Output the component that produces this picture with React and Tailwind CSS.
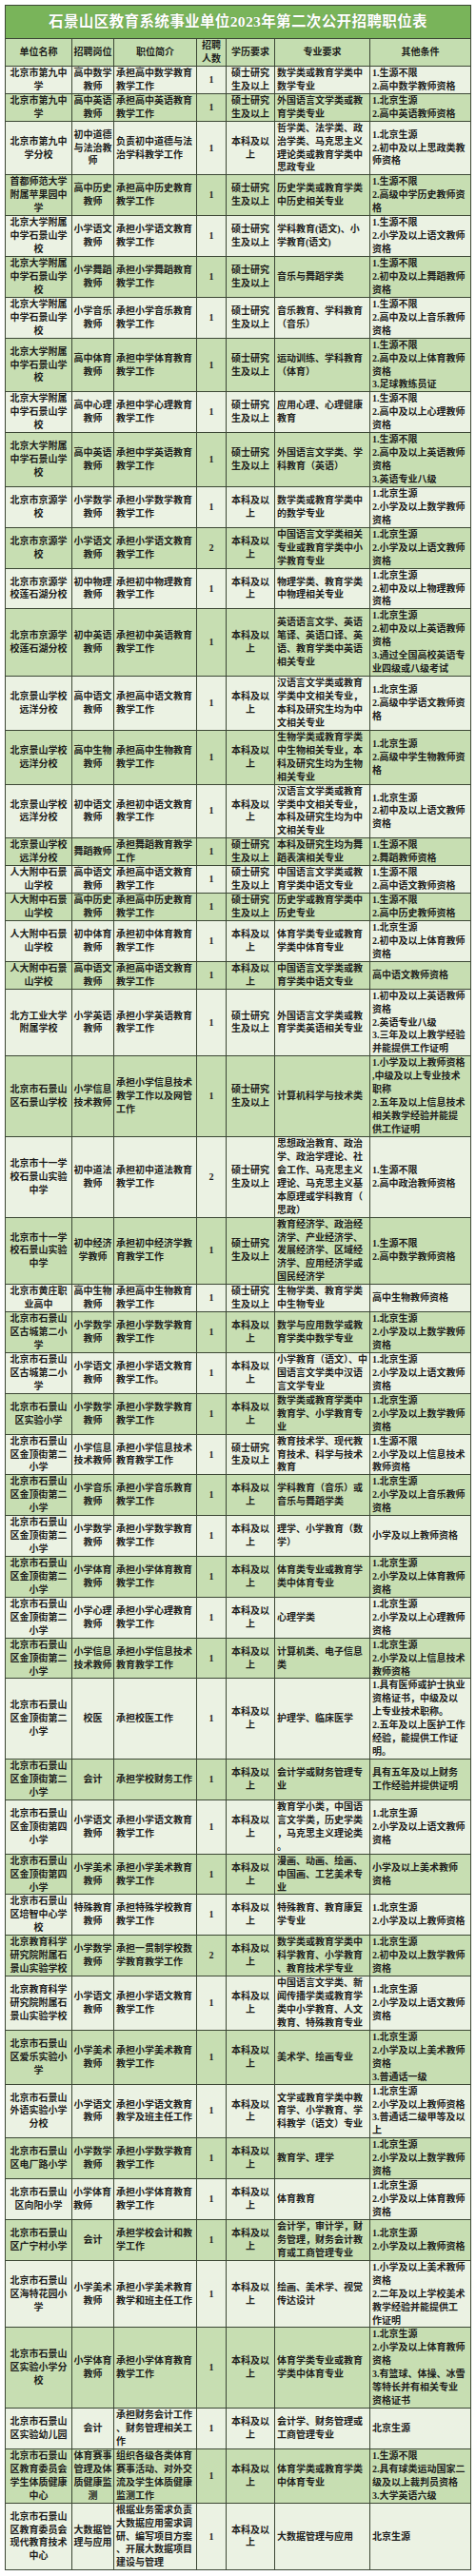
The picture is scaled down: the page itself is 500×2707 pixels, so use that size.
import React from 'react';

const headers = ['单位名称', '招聘岗位', '职位简介', '招聘人数', '学历要求', '专业要求', '其他条件'];

const MS = '硕士研究生及以上';
const BK = '本科及以上';
const BD = '北京大学附属中学石景山学校';
const JY = '北京景山学校远洋分校';
const RD = '人大附中石景山学校';
const JD2 = '北京市石景山区金顶街第二小学';
const JKY = '北京教育科学研究院附属石景山实验学校';

// [单位, 岗位, 简介, 人数, 学历, 专业, 其他条件(数组)]
const rows = [
  ['北京市第九中学', '高中数学教师', '承担高中数学教育教学工作', 1, MS, '数学类或教育学类中数学专业', ['1.生源不限', '2.高中数学教师资格']],
  ['北京市第九中学', '高中英语教师', '承担高中英语教育教学工作', 1, MS, '外国语言文学类或教育学类专业', ['1.北京生源', '2.高中英语教师资格']],
  ['北京市第九中学分校', '初中道德与法治教师', '负责初中道德与法治学科教学工作', 1, BK, '哲学类、法学类、政治学类、马克思主义理论类或教育学类中思政专业', ['1.北京生源', '2.初中及以上思政类教师资格']],
  ['首都师范大学附属苹果园中学', '高中历史教师', '承担高中历史教育教学工作', 1, MS, '历史学类或教育学类中历史相关专业', ['1.生源不限', '2.高级中学历史教师资格']],
  [BD, '小学语文教师', '承担小学语文教育教学工作', 1, MS, '学科教育(语文)、小学教育(语文)', ['1.生源不限', '2.小学及以上语文教师资格']],
  [BD, '小学舞蹈教师', '承担小学舞蹈教育教学工作', 1, MS, '音乐与舞蹈学类', ['1.生源不限', '2.初中及以上舞蹈教师资格']],
  [BD, '小学音乐教师', '承担小学音乐教育教学工作', 1, MS, '音乐教育、学科教育（音乐）', ['1.生源不限', '2.高中及以上音乐教师资格']],
  [BD, '高中体育教师', '承担中学体育教育教学工作', 1, MS, '运动训练、学科教育（体育）', ['1.生源不限', '2.高中及以上体育教师资格', '3.足球教练员证']],
  [BD, '高中心理教师', '承担中学心理教育教学工作', 1, MS, '应用心理、心理健康教育', ['1.生源不限', '2.高中及以上心理教师资格']],
  [BD, '高中英语教师', '承担中学英语教育教学工作', 1, MS, '外国语言文学类、学科教育（英语）', ['1.生源不限', '2.高中及以上英语教师资格', '3.英语专业八级']],
  ['北京市京源学校', '小学数学教师', '承担小学数学教育教学工作', 1, BK, '数学类或教育学类中的数学专业', ['1.北京生源', '2.小学及以上数学教师资格']],
  ['北京市京源学校', '小学语文教师', '承担小学语文教育教学工作', 2, BK, '中国语言文学类相关专业或教育学类中小学教育专业', ['1.北京生源', '2.小学及以上语文教师资格']],
  ['北京市京源学校莲石湖分校', '初中物理教师', '承担初中物理教育教学工作', 1, BK, '物理学类、教育学类中物理相关专业', ['1.北京生源', '2.初中及以上物理教师资格']],
  ['北京市京源学校莲石湖分校', '初中英语教师', '承担初中英语教育教学工作', 1, BK, '英语语言文学、英语笔译、英语口译、英语、教育学类中英语相关专业', ['1.北京生源', '2.初中及以上英语教师资格', '3.通过全国高校英语专业四级或八级考试']],
  [JY, '高中语文教师', '承担高中语文教育教学工作', 1, BK, '汉语言文学类或教育学类中文相关专业，本科及研究生均为中文相关专业', ['1.北京生源', '2.高级中学语文教师资格']],
  [JY, '高中生物教师', '承担高中生物教育教学工作', 1, BK, '生物学类或教育学类中生物相关专业，本科及研究生均为生物相关专业', ['1.北京生源', '2.高级中学生物教师资格']],
  [JY, '初中语文教师', '承担初中语文教育教学工作', 1, BK, '汉语言文学类或教育学类中文相关专业，本科及研究生均为中文相关专业', ['1.北京生源', '2.初中及以上语文教师资格']],
  [JY, '舞蹈教师', '承担舞蹈教育教学工作', 1, MS, '本科及研究生均为舞蹈表演相关专业', ['1.生源不限', '2.舞蹈教师资格']],
  [RD, '高中语文教师', '承担高中语文教育教学工作', 1, MS, '中国语言文学类或教育学类中语文专业', ['1.生源不限', '2.高中语文教师资格']],
  [RD, '高中历史教师', '承担高中历史教育教学工作', 1, MS, '历史学或教育学类中历史专业', ['1.生源不限', '2.高中历史教师资格']],
  [RD, '初中体育教师', '承担初中体育教育教学工作', 1, BK, '体育学类专业或教育学类中体育专业', ['1.北京生源', '2.初中及以上体育教师资格']],
  [RD, '高中语文教师', '承担高中语文教育教学工作', 1, BK, '中国语言文学类或教育学类中语文专业', ['高中语文教师资格']],
  ['北方工业大学附属学校', '小学英语教师', '承担小学英语教育教学工作', 1, MS, '外国语言文学类或教育学类英语相关专业', ['1.初中及以上英语教师资格', '2.英语专业八级', '3.三年及以上教学经验并能提供工作证明']],
  ['北京市石景山区石景山学校', '小学信息技术教师', '承担小学信息技术教学工作以及网管工作', 1, MS, '计算机科学与技术类', ['1.小学及以上教师资格,中级及以上专业技术职称', '2.五年及以上信息技术相关教学经验并能提供工作证明']],
  ['北京市十一学校石景山实验中学', '初中道法教师', '承担初中道法教育教学工作', 2, MS, '思想政治教育、政治学、政治学理论、社会工作、马克思主义理论、马克思主义基本原理或学科教育（思政）', ['1.生源不限', '2.高中政治教师资格']],
  ['北京市十一学校石景山实验中学', '初中经济学教师', '承担初中经济学教育教学工作', 1, MS, '教育经济学、政治经济学、产业经济学、发展经济学、区域经济学、应用经济学或国民经济学', ['1.生源不限', '2.高中数学教师资格']],
  ['北京市黄庄职业高中', '高中生物教师', '承担高中生物教育教学工作', 1, MS, '生物学类、教育学类中生物专业', ['高中生物教师资格']],
  ['北京市石景山区古城第二小学', '小学数学教师', '承担小学数学教育教学工作', 1, BK, '数学与应用数学或教育学类中数学专业', ['1.北京生源', '2.小学及以上数学教师资格']],
  ['北京市石景山区古城第二小学', '小学语文教师', '承担小学语文教育教学工作。', 1, BK, '小学教育（语文）、中国语言文学类中汉语言文学专业', ['1.北京生源', '2.小学及以上语文教师资格']],
  ['北京市石景山区实验小学', '小学数学教师', '承担小学数学教育教学工作', 1, BK, '数学类或教育学类中教育学、小学教育专业', ['1.北京生源', '2.小学及以上数学教师资格']],
  [JD2, '小学信息技术教师', '承担小学信息技术教育教学工作', 1, MS, '教育技术学、现代教育技术、科学与技术教育', ['1.生源不限', '2.小学及以上信息技术教师资格']],
  [JD2, '小学音乐教师', '承担小学音乐教育教学工作', 1, BK, '学科教育（音乐）或音乐与舞蹈学类', ['1.北京生源', '2.小学及以上音乐教师资格']],
  [JD2, '小学数学教师', '承担小学数学教育教学工作', 1, BK, '理学、小学教育（数学）', ['小学及以上教师资格']],
  [JD2, '小学体育教师', '承担小学体育教育教学工作', 1, BK, '体育类专业或教育学类中体育专业', ['1.北京生源', '2.小学及以上体育教师资格']],
  [JD2, '小学心理教师', '承担小学心理教育教学工作', 1, BK, '心理学类', ['1.北京生源', '2.小学及以上心理教师资格']],
  [JD2, '小学信息技术教师', '承担小学信息技术教育教学工作', 1, BK, '计算机类、电子信息类', ['1.北京生源', '2.小学及以上信息技术教师资格']],
  [JD2, '校医', '承担校医工作', 1, BK, '护理学、临床医学', ['1.具有医师或护士执业资格证书，中级及以上专业技术职称。', '2.五年及以上医护工作经验，能提供工作证明。']],
  [JD2, '会计', '承担学校财务工作', 1, BK, '会计学或财务管理专业', ['具有五年及以上财务工作经验并提供证明']],
  ['北京市石景山区金顶街第四小学', '小学语文教师', '承担小学语文教育教学工作', 1, BK, '教育学小类，中国语言文学类，历史学类，马克思主义理论类。', ['1.北京生源', '2.小学及以上语文教师资格']],
  ['北京市石景山区金顶街第四小学', '小学美术教师', '承担小学美术教育教学工作', 1, BK, '漫画、动画、绘画、中国画、工艺美术专业', ['小学及以上美术教师资格']],
  ['北京市石景山区培智中心学校', '特殊教育教师', '承担特殊学校教育教学工作', 1, BK, '特殊教育、教育康复学专业', ['1.北京生源', '2.小学及以上教师资格']],
  [JKY, '小学数学教师', '承担一贯制学校数学教育教学工作', 2, BK, '数学类或教育学类中科学教育、小学教育、教育技术学专业', ['1.北京生源', '2.初中及以上数学教师资格']],
  [JKY, '小学语文教师', '承担小学语文教育教学工作', 1, BK, '中国语言文学类、新闻传播学类或教育学类中小学教育、人文教育、特殊教育专业', ['1.北京生源', '2.小学及以上语文教师资格']],
  ['北京市石景山区爱乐实验小学', '小学美术教师', '承担小学美术教育教学工作', 1, BK, '美术学、绘画专业', ['1.北京生源', '2.小学及以上美术教师资格', '3.普通话一级']],
  ['北京市石景山外语实验小学分校', '小学语文教师', '承担小学语文教育教学及班主任工作', 1, BK, '文学或教育学类中教育学、小学教育、学科教学（语文）专业', ['1.北京生源', '2.小学及以上教师资格', '3.普通话二级甲等及以上']],
  ['北京市石景山区电厂路小学', '小学数学教师', '承担小学数学教育教学工作', 1, BK, '教育学、理学', ['1.北京生源', '2.小学及以上数学教师资格']],
  ['北京市石景山区向阳小学', '小学体育教师', '承担小学体育教育教学工作', 1, BK, '体育教育', ['1.北京生源', '2.小学及以上体育教师资格'], true],
  ['北京市石景山区广宁村小学', '会计', '承担学校会计和教学工作', 1, BK, '会计学，审计学，财务管理，财务会计教育或工商管理专业', ['1.北京生源', '2.小学及以上教师资格']],
  ['北京市石景山区海特花园小学', '小学美术教师', '承担小学美术教育教学和班主任工作', 1, BK, '绘画、美术学、视觉传达设计', ['1.小学及以上美术教师资格', '2.二年及以上学校美术教学经验并能提供工作证明']],
  ['北京市石景山区实验小学分校', '小学体育教师', '承担小学体育教育教学工作', 1, BK, '体育学类专业或教育学类中体育专业', ['1.北京生源', '2.小学及以上体育教师资格', '3.有篮球、体操、冰雪等特长并有相关专业资格证书']],
  ['北京市石景山区实验幼儿园', '会计', '承担财务会计工作、财务管理相关工作', 1, BK, '会计学、财务管理或工商管理专业', ['北京生源']],
  ['北京市石景山区教育委员会学生体质健康中心', '体育赛事管理及体质健康监测', '组织各级各类体育赛事活动、对外交流及学生体质健康监测工作', 1, BK, '体育学类或教育学类中体育专业', ['1.生源不限', '2.具有球类运动国家二级及以上裁判员资格', '3.大学英语六级']],
  ['北京市石景山区教育委员会现代教育技术中心', '大数据管理与应用', '根据业务需求负责大数据应用需求调研、编写项目方案、开展大数据项目建设与管理', 1, BK, '大数据管理与应用', ['北京生源']],
];

// per-column alignment and padding
const colClass = [
  'text-center px-[2px]',
  'text-center px-px',
  'text-left px-[2px]',
  'text-center px-px',
  'text-center px-px',
  'text-left px-[2px]',
  'text-left pl-[2px] pr-[4px]',
];

const Cell = ({ bg, className = '', children }) => (
  <div className={`${bg} ${className} flex flex-col justify-center break-all [line-break:anywhere]`}>
    {children}
  </div>
);

const App = () => {
  return (
    <div className="bg-white px-[5px] pt-[5px] pb-[7px]">
      <div
        className="grid grid-cols-[69px_43px_86px_30px_50px_99px_105px] gap-px bg-[#3c4735] p-px text-[10px] leading-[13.93px] font-bold text-[#1d1d1b]"
        style={{ fontFamily: '"Liberation Serif", "Noto Sans CJK SC", serif' }}
      >
        <div className="col-span-7 h-[34px] bg-[#79b45a] flex items-center justify-center text-white text-[15.6px] leading-none tracking-[0.3px] [text-shadow:0_0_1px_rgba(0,0,0,0.25)]">
          石景山区教育系统事业单位2023年第二次公开招聘职位表
        </div>

        {headers.map((h) => (
          <Cell key={h} bg="bg-[#c4ddb0]" className="text-center px-px">
            {h}
          </Cell>
        ))}

        {rows.map((row, i) => {
          const bg = i % 2 === 0 ? 'bg-[#ebf2e3]' : 'bg-[#c7deb2]';
          const [unit, post, intro, num, edu, major, other, postLeft] = row;
          return (
            <React.Fragment key={i}>
              <Cell bg={bg} className={colClass[0]}>{unit}</Cell>
              <Cell bg={bg} className={postLeft ? 'text-left px-px' : colClass[1]}>{post}</Cell>
              <Cell bg={bg} className={colClass[2]}>{intro}</Cell>
              <Cell bg={bg} className={colClass[3]}>{num}</Cell>
              <Cell bg={bg} className={colClass[4]}>{edu}</Cell>
              <Cell bg={bg} className={colClass[5]}>{major}</Cell>
              <Cell bg={bg} className={colClass[6]}>
                {other.map((line) => (
                  <div key={line}>{line}</div>
                ))}
              </Cell>
            </React.Fragment>
          );
        })}
      </div>
    </div>
  );
};

export default App;
